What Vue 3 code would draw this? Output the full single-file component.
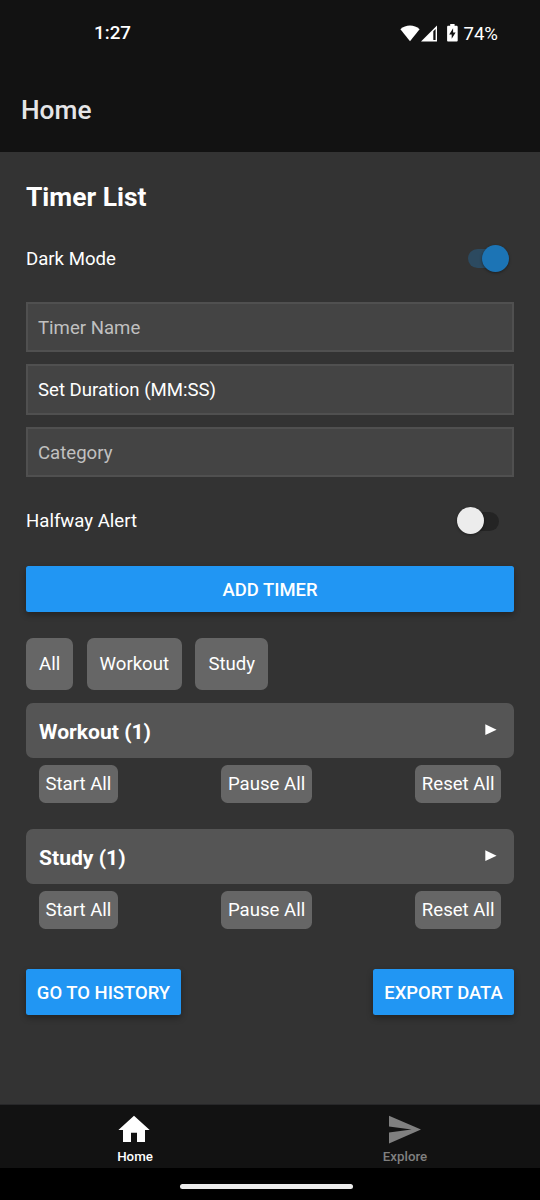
<script setup>
import { ref } from 'vue'

const darkMode = ref(true)
const halfwayAlert = ref(false)
const filters = ['All', 'Workout', 'Study']
const groups = [
  { name: 'Workout', count: 1 },
  { name: 'Study', count: 1 },
]
const actions = ['Start All', 'Pause All', 'Reset All']
</script>

<template>
  <div class="screen">
    <div class="status">
      <span class="clock">1:27</span>
      <div class="indicators">
        <svg class="wifi" width="20" height="17" viewBox="0 0 20 17"><path d="M0.4 4.2C5.6-.8 14.4-.8 19.6 4.2L10 16.2z" fill="#fff" /></svg>
        <svg class="signal" width="17" height="17" viewBox="0 0 17 17"><path d="M0 16.6L16 0.6V16.6z" fill="#fff" /><path d="M12.3 6.2L14.6 4V15h-2.3z" fill="#121212" /></svg>
        <svg class="battery" width="11" height="18" viewBox="0 0 11 18"><path d="M3.2 0h4.4v1.8h1.9c.7 0 1.2.5 1.2 1.2v13.4c0 .7-.5 1.2-1.2 1.2H1.3c-.7 0-1.2-.5-1.2-1.2V3c0-.7.5-1.2 1.2-1.2h1.9z" fill="#fff" /><path d="M6.1 4.2L2.2 10.4h2.5v4.4l3.9-6.2H6.1z" fill="#121212" /></svg>
        <span class="percent">74%</span>
      </div>
    </div>
    <header class="appbar">Home</header>

    <main class="content">
      <h1 class="title">Timer List</h1>
      <div class="setting">
        <span>Dark Mode</span>
        <div class="switch" :class="{ on: darkMode }"><i class="track"></i><i class="thumb"></i></div>
      </div>
      <div class="form">
        <div class="field hint">Timer Name</div>
        <div class="field">Set Duration (MM:SS)</div>
        <div class="field hint">Category</div>
      </div>
      <div class="setting halfway">
        <span>Halfway Alert</span>
        <div class="switch" :class="{ on: halfwayAlert }"><i class="track"></i><i class="thumb"></i></div>
      </div>
      <button class="primary">ADD TIMER</button>
      <div class="filters">
        <button v-for="f in filters" :key="f" class="chip">{{ f }}</button>
      </div>
      <section v-for="g in groups" :key="g.name" class="group">
        <div class="group-head">
          <span>{{ g.name }} ({{ g.count }})</span>
          <svg width="12" height="12" viewBox="0 0 12 12"><path d="M0.3 0.3L11.6 5.7L0.3 11z" fill="#fff" /></svg>
        </div>
        <div class="group-actions">
          <button v-for="a in actions" :key="a" class="small">{{ a }}</button>
        </div>
      </section>
      <div class="footer">
        <button class="primary history">GO TO HISTORY</button>
        <button class="primary export">EXPORT DATA</button>
      </div>
    </main>

    <nav class="tabs">
      <div class="tab active">
        <svg width="34" height="30" viewBox="0 0 34 30"><path d="M16 1.8L0.4 16H5v12h8V18.8h6V28h8V16h4.7z" fill="#fff" /></svg>
        <span>Home</span>
      </div>
      <div class="tab">
        <svg width="34" height="30" viewBox="0 0 34 30"><path d="M1 1.8L33 15.6L1 29.4V18.6L23.5 15.6L1 12.6z" fill="#808080" /></svg>
        <span>Explore</span>
      </div>
    </nav>
    <div class="gesture"><i></i></div>
  </div>
</template>

<style>
body {
  margin: 0;
  background: #333;
}
</style>

<style scoped>
.screen {
  width: 540px;
  height: 1200px;
  display: flex;
  flex-direction: column;
  overflow: hidden;
  background: #333;
  color: #fff;
  font-family: Roboto, "Liberation Sans", sans-serif;
  font-size: 18.6px;
  box-sizing: border-box;
}
button {
  border: 0;
  margin: 0;
  color: #fff;
  font: inherit;
  white-space: nowrap;
}
svg {
  display: block;
  flex: none;
}
.status {
  height: 68px;
  flex: none;
  display: flex;
  align-items: center;
  justify-content: space-between;
  padding: 0 42px 2px 94px;
  box-sizing: border-box;
  background: #121212;
  font-size: 18.8px;
  font-weight: 500;
}
.indicators {
  display: flex;
  align-items: center;
}
.signal {
  margin-left: 1px;
}
.battery {
  margin-left: 9px;
}
.percent {
  margin-left: 5px;
  padding-top: 2px;
  font-weight: 400;
  font-size: 18.6px;
}
.appbar {
  height: 84px;
  flex: none;
  padding-left: 21px;
  line-height: 85px;
  background: #121212;
  color: #e5e5e7;
  font-size: 26.25px;
  font-weight: 500;
}
.content {
  flex: 1;
  padding: 26px;
}
.title {
  margin: 0;
  height: 38px;
  line-height: 38px;
  font-size: 26.4px;
  font-weight: 700;
}
.setting {
  display: flex;
  align-items: center;
  justify-content: space-between;
  height: 36px;
  margin-top: 25px;
}
.setting span {
  padding-bottom: 1px;
}
.switch {
  position: relative;
  width: 62px;
  height: 36px;
}
.track {
  position: absolute;
  left: 16px;
  top: 8px;
  width: 31px;
  height: 19px;
  border-radius: 10px;
  background: #242424;
}
.thumb {
  position: absolute;
  left: 5px;
  top: 3.5px;
  width: 27px;
  height: 27px;
  border-radius: 50%;
  background: #ececec;
  box-shadow: 0 1px 3px rgba(0, 0, 0, 0.4);
}
.switch.on .track {
  background: #2c4a60;
}
.switch.on .thumb {
  left: 30px;
  background: #1c74b5;
}
.form {
  display: grid;
  gap: 12px;
  margin-top: 25px;
}
.field {
  height: 50.4px;
  box-sizing: border-box;
  border: 2px solid #505050;
  background: #444;
  padding-left: 10px;
  line-height: 48px;
}
.hint {
  color: #c0c0c0;
}
.halfway {
  margin-top: 26.8px;
}
.primary {
  display: block;
  width: 100%;
  height: 46px;
  padding: 0;
  border-radius: 2.5px;
  background: #2196f3;
  font-size: 18.45px;
  font-weight: 500;
  line-height: 48px;
  box-shadow: 0 3px 6px rgba(0, 0, 0, 0.32);
}
.content > .primary {
  margin-top: 26px;
}
.filters {
  display: flex;
  gap: 13.4px;
  margin-top: 26px;
}
.chip {
  height: 52px;
  padding: 0 13px;
  border-radius: 7px;
  background: #666;
}
.group {
  margin-top: 13px;
}
.group + .group {
  margin-top: 26px;
}
.group-head {
  height: 55px;
  display: flex;
  align-items: center;
  justify-content: space-between;
  padding: 0 17px 0 13px;
  border-radius: 7px;
  background: #555;
  font-size: 21.1px;
  font-weight: 700;
}
.group-head span {
  padding-top: 2px;
}
.group-actions {
  display: flex;
  justify-content: space-between;
  padding: 7px 13px 0;
}
.small {
  height: 38px;
  padding: 0 6.5px;
  border-radius: 6.5px;
  background: #666;
}
.footer {
  display: flex;
  justify-content: space-between;
  margin-top: 40px;
}
.history {
  width: 155px;
}
.export {
  width: 141px;
}
.tabs {
  height: 64px;
  flex: none;
  display: flex;
  background: #121212;
  border-top: 1px solid #272729;
  box-sizing: border-box;
}
.tab {
  flex: 1;
  display: flex;
  flex-direction: column;
  align-items: center;
  padding-top: 9px;
  color: #808080;
  font-size: 13.3px;
  font-weight: 500;
  line-height: 16px;
}
.tab span {
  margin-top: 5px;
}
.active {
  color: #fff;
}
.gesture {
  height: 32px;
  flex: none;
  display: flex;
  padding: 16px 0 0 180px;
  box-sizing: border-box;
  background: #000;
}
.gesture i {
  width: 173px;
  height: 5px;
  border-radius: 3px;
  background: #ececec;
}
</style>
